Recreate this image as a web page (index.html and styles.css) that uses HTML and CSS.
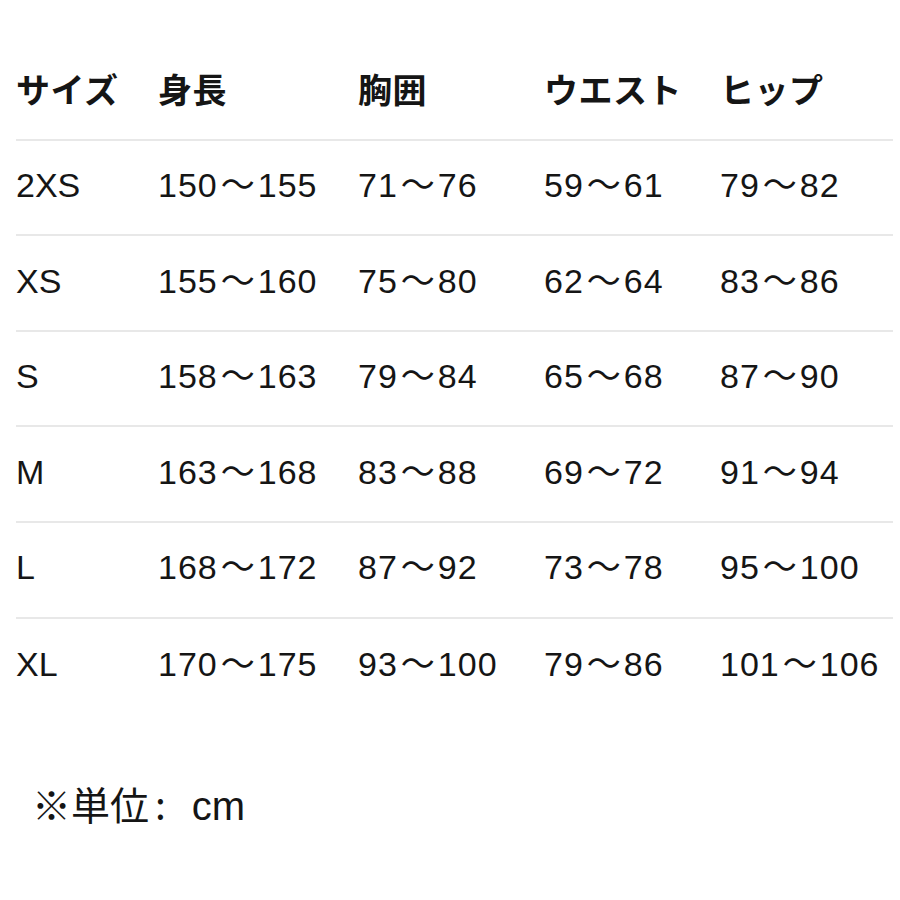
FILE: index.html
```html
<!DOCTYPE html>
<html lang="ja">
<head>
<meta charset="utf-8">
<title>サイズ表</title>
<link rel="stylesheet" href="styles.css">
</head>
<body>
<div class="page">
  <div class="table">
    <div class="row head">
      <div>サイズ</div><div>身長</div><div>胸囲</div><div>ウエスト</div><div>ヒップ</div>
    </div>
    <div class="row">
      <div>2XS</div><div class="n">150<span class="t">～</span>155</div><div class="n">71<span class="t">～</span>76</div><div class="n">59<span class="t">～</span>61</div><div class="n">79<span class="t">～</span>82</div>
    </div>
    <div class="row">
      <div>XS</div><div class="n">155<span class="t">～</span>160</div><div class="n">75<span class="t">～</span>80</div><div class="n">62<span class="t">～</span>64</div><div class="n">83<span class="t">～</span>86</div>
    </div>
    <div class="row">
      <div>S</div><div class="n">158<span class="t">～</span>163</div><div class="n">79<span class="t">～</span>84</div><div class="n">65<span class="t">～</span>68</div><div class="n">87<span class="t">～</span>90</div>
    </div>
    <div class="row">
      <div>M</div><div class="n">163<span class="t">～</span>168</div><div class="n">83<span class="t">～</span>88</div><div class="n">69<span class="t">～</span>72</div><div class="n">91<span class="t">～</span>94</div>
    </div>
    <div class="row">
      <div>L</div><div class="n">168<span class="t">～</span>172</div><div class="n">87<span class="t">～</span>92</div><div class="n">73<span class="t">～</span>78</div><div class="n">95<span class="t">～</span>100</div>
    </div>
    <div class="row last">
      <div>XL</div><div class="n">170<span class="t">～</span>175</div><div class="n">93<span class="t">～</span>100</div><div class="n">79<span class="t">～</span>86</div><div class="n">101<span class="t">～</span>106</div>
    </div>
  </div>
  <p class="note"><span class="cjk">※単位<span class="colon">:</span></span>cm</p>
</div>
</body>
</html>
```
FILE: styles.css
```css
html, body {
  margin: 0;
  padding: 0;
  background: #ffffff;
}
.page {
  padding: 45px 7px 0 16px;
  color: #151515;
  font-family: "Liberation Sans", Arial, "Noto Sans CJK JP", sans-serif;
}
.table {
  display: flex;
  flex-direction: column;
}
.row {
  display: grid;
  grid-template-columns: 142px 200px 186px 176px 1fr;
  align-items: baseline;
  align-content: center;
  box-sizing: border-box;
  height: 95.6px;
  padding-bottom: 4px;
  border-bottom: 2px solid #e8e8e8;
  font-size: 34px;
  line-height: 1.2;
}
.row.last {
  border-bottom: none;
}
.n {
  letter-spacing: 1px;
}
.head {
  font-family: "Noto Sans CJK JP", sans-serif;
  font-weight: 700;
  font-size: 34px;
  letter-spacing: 0.5px;
}
.t {
  font-family: "Noto Sans CJK JP", sans-serif;
  line-height: 0.9;
  letter-spacing: 0;
  margin: 0 3px 0 3px;
}
.note {
  margin: 68px 0 0 16px;
  font-size: 40px;
  line-height: 1.2;
}
.cjk {
  font-family: "Noto Sans CJK JP", sans-serif;
  font-size: 39px;
  line-height: 0.9;
}
.colon {
  margin: 0 26px 0 6px;
}
```
